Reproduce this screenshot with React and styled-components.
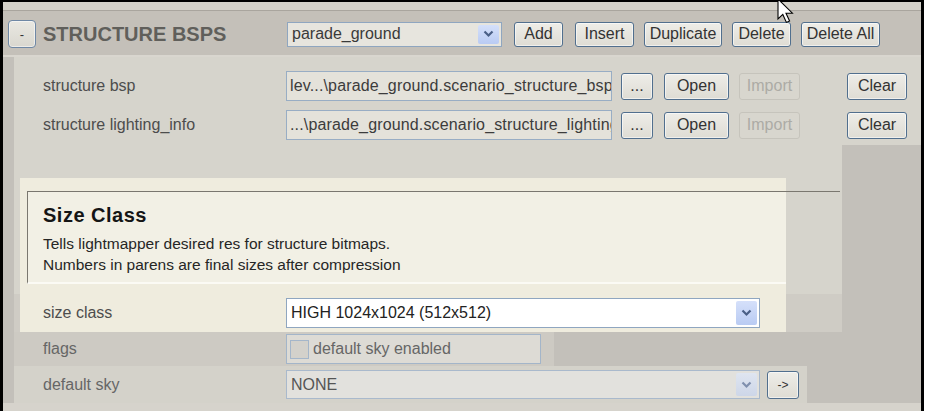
import styled, { createGlobalStyle } from "styled-components";

const GlobalStyle = createGlobalStyle`
  html, body {
    margin: 0;
    padding: 0;
    background: #fff;
  }
  body {
    font-family: "Liberation Sans", Arial, sans-serif;
  }
`;

const Chevron = ({ color = "#4a5f86" }) => (
  <svg width="11" height="8" viewBox="0 0 11 8">
    <path d="M1.5 1.5 L5.5 5.5 L9.5 1.5" fill="none" stroke={color} strokeWidth="2.2" />
  </svg>
);

const Cursor = () => (
  <CursorWrap>
    <svg width="20" height="28" viewBox="0 0 20 28">
      <path
        d="M1 1 L1 21 L5.8 16.4 L9.4 24.4 L12.6 23 L9 15.2 L15.4 15.2 Z"
        fill="#fff"
        stroke="#000"
        strokeWidth="1.1"
        strokeLinejoin="miter"
      />
    </svg>
  </CursorWrap>
);

const App = () => {
  return (
    <>
      <GlobalStyle />
      <Frame>
        <TopStrip />
        <Header>
          <CollapseButton>-</CollapseButton>
          <BlockTitle>STRUCTURE BSPS</BlockTitle>
          <Select $w={215} $h={25}>
            <SelectText>parade_ground</SelectText>
            <ArrowBox>
              <Chevron />
            </ArrowBox>
          </Select>
          <Btn $w={49} $ml={12}>Add</Btn>
          <Btn $w={59} $ml={12}>Insert</Btn>
          <Btn $w={78} $ml={10}>Duplicate</Btn>
          <Btn $w={59} $ml={10}>Delete</Btn>
          <Btn $w={79} $ml={10}>Delete All</Btn>
        </Header>

        <Body>
          <BspPanel>
            <Row>
              <Label>structure bsp</Label>
              <PathField>lev...\parade_ground.scenario_structure_bsp</PathField>
              <Btn $w={32} $h={27} $ml={9}>...</Btn>
              <Btn $w={65} $h={27} $ml={11}>Open</Btn>
              <Btn $w={61} $h={27} $ml={10} disabled>Import</Btn>
              <Btn $w={60} $h={27} $ml={47}>Clear</Btn>
            </Row>
            <Row>
              <Label>structure lighting_info</Label>
              <PathField>...\parade_ground.scenario_structure_lighting</PathField>
              <Btn $w={32} $h={27} $ml={9}>...</Btn>
              <Btn $w={65} $h={27} $ml={11}>Open</Btn>
              <Btn $w={61} $h={27} $ml={10} disabled>Import</Btn>
              <Btn $w={60} $h={27} $ml={47}>Clear</Btn>
            </Row>
          </BspPanel>

          <HelpArea>
            <HelpBlock>
              <HelpBox>
                <HelpTitle>Size Class</HelpTitle>
                <HelpText>
                  Tells lightmapper desired res for structure bitmaps.
                  <br />
                  Numbers in parens are final sizes after compression
                </HelpText>
              </HelpBox>
              <SizeRow>
                <Label>size class</Label>
                <Select $w={474} $h={30} $bg="#fff">
                  <SelectText $color="#222">HIGH 1024x1024 (512x512)</SelectText>
                  <ArrowBox>
                    <Chevron />
                  </ArrowBox>
                </Select>
              </SizeRow>
            </HelpBlock>
          </HelpArea>

          <FieldRow $w={540} $h={34} $bg="#cdcac3">
            <Label $muted>flags</Label>
            <CheckField>
              <CheckBox />
              <span>default sky enabled</span>
            </CheckField>
          </FieldRow>

          <FieldRow $w={793} $h={37} $bg="#d4d2ca">
            <Label $muted>default sky</Label>
            <Select $w={474} $h={29} $bg="#e2e1dd" $muted>
              <SelectText $color="#555">NONE</SelectText>
              <ArrowBox $muted>
                <Chevron color="#7f8fae" />
              </ArrowBox>
            </Select>
            <Btn $w={32} $h={28} $ml={7} $small>-&gt;</Btn>
          </FieldRow>
        </Body>

        <BottomStrip />
        <Cursor />
      </Frame>
    </>
  );
};

const Frame = styled.div`
  position: relative;
  width: 918px;
  height: 409px;
  border-top: 2px solid #000;
  border-left: 3px solid #000;
  border-right: 3px solid #000;
  background: #c3c0ba;
  display: flex;
  flex-direction: column;
`;

const TopStrip = styled.div`
  height: 8px;
  background: #d4d1c9;
  border-bottom: 1px solid #a9a59e;
`;

const Header = styled.div`
  height: 46px;
  box-sizing: border-box;
  display: flex;
  align-items: center;
  padding: 2px 0 0 5px;
  background: #c4c0b9;
  border-bottom: 2px solid #d9d6cf;
`;

const CollapseButton = styled.div`
  width: 28px;
  height: 28px;
  box-sizing: border-box;
  display: flex;
  align-items: center;
  justify-content: center;
  border: 1px solid #6f88a5;
  border-radius: 4px;
  background: linear-gradient(#e9e8e2, #d9d7cf);
  box-shadow: inset 0 0 0 1px rgba(255, 255, 255, 0.5);
  font-size: 13px;
  color: #333;
`;

const BlockTitle = styled.div`
  width: 237px;
  margin-left: 7px;
  font-size: 20px;
  font-weight: bold;
  color: #605f5b;
  white-space: nowrap;
`;

const Select = styled.div`
  width: ${({ $w }) => $w}px;
  height: ${({ $h }) => $h}px;
  margin-left: 7px;
  box-sizing: border-box;
  display: flex;
  align-items: center;
  border: 1px solid ${({ $muted }) => ($muted ? "#a9b9cc" : "#8fa6c0")};
  background: ${({ $bg }) => $bg || "#e7e5de"};
  padding: 2px;
`;

const SelectText = styled.span`
  flex: 1;
  padding-left: 2px;
  font-size: 16px;
  color: ${({ $color }) => $color || "#3a3a3a"};
  white-space: nowrap;
  overflow: hidden;
`;

const ArrowBox = styled.span`
  width: 21px;
  align-self: stretch;
  display: flex;
  align-items: center;
  justify-content: center;
  border-radius: 2px;
  background: ${({ $muted }) =>
    $muted ? "linear-gradient(#dfe5f0, #cdd6e8)" : "linear-gradient(#d5e0fa, #b9cbf3)"};
`;

const Btn = styled.button`
  width: ${({ $w }) => $w}px;
  height: ${({ $h }) => $h || 25}px;
  margin-left: ${({ $ml }) => $ml || 0}px;
  box-sizing: border-box;
  padding: 0;
  border: 1px solid ${({ disabled }) => (disabled ? "#c6c4bc" : "#516f8e")};
  border-radius: 3px;
  background: ${({ disabled }) =>
    disabled ? "#d8d6ce" : "linear-gradient(#eeede8, #dedcd4)"};
  box-shadow: ${({ disabled }) =>
    disabled ? "none" : "inset 0 0 0 1px rgba(255, 255, 255, 0.55)"};
  color: ${({ disabled }) => (disabled ? "#acaba5" : "#333")};
  font-family: "Liberation Sans", Arial, sans-serif;
  font-size: ${({ $small }) => ($small ? 12 : 16)}px;
  white-space: nowrap;
  flex-shrink: 0;
`;

const Body = styled.div`
  display: flex;
  flex-direction: column;
  padding-left: 11px;
`;

const BspPanel = styled.div`
  height: 88px;
  box-sizing: border-box;
  padding: 14px 0 0 29px;
  display: flex;
  flex-direction: column;
  gap: 9px;
  background: #d6d4cc;
`;

const Row = styled.div`
  height: 30px;
  display: flex;
  align-items: center;
`;

const Label = styled.div`
  width: 243px;
  flex-shrink: 0;
  font-size: 16px;
  color: ${({ $muted }) => ($muted ? "#666" : "#4d4d4d")};
  white-space: nowrap;
`;

const PathField = styled.div`
  width: 326px;
  height: 30px;
  box-sizing: border-box;
  padding: 0 3px;
  display: flex;
  align-items: center;
  border: 1px solid #98adc4;
  background: #e4e2da;
  font-size: 16px;
  letter-spacing: 0.15px;
  color: #3c3c3c;
  white-space: nowrap;
  overflow: hidden;
`;

const HelpArea = styled.div`
  width: 828px;
  height: 187px;
  box-sizing: border-box;
  padding: 33px 0 0 6px;
  background: linear-gradient(#d6d4cc 149px, #cfccc5 149px);
`;

const HelpBlock = styled.div`
  position: relative;
  width: 766px;
  height: 154px;
  box-sizing: border-box;
  padding-top: 13px;
  background: #efecde;

  /* divider runs on past the highlight */
  &::after {
    content: "";
    position: absolute;
    top: 13px;
    left: 100%;
    width: 54px;
    height: 1px;
    background: #7a776f;
  }
`;

const HelpBox = styled.div`
  height: 93px;
  box-sizing: border-box;
  margin-left: 7px;
  padding: 11px 0 0 15px;
  border-top: 1px solid #7a776f;
  border-left: 1px solid #7a776f;
  border-bottom: 2px solid #fbfaf4;
  background: #f2f0e5;
`;

const HelpTitle = styled.div`
  font-size: 20px;
  font-weight: bold;
  letter-spacing: 0.5px;
  line-height: 24px;
  color: #151515;
`;

const HelpText = styled.div`
  margin-top: 6px;
  font-size: 15.5px;
  line-height: 21px;
  color: #262626;
`;

const SizeRow = styled.div`
  height: 48px;
  box-sizing: border-box;
  display: flex;
  align-items: center;
  padding: 14px 0 4px 23px;

  & > ${Select} {
    margin-left: 0;
  }
`;

const FieldRow = styled.div`
  width: ${({ $w }) => $w}px;
  height: ${({ $h }) => $h}px;
  box-sizing: border-box;
  display: flex;
  align-items: center;
  padding-left: 29px;
  background: ${({ $bg }) => $bg};

  & > ${Select} {
    margin-left: 0;
  }
`;

const CheckField = styled.div`
  width: 255px;
  height: 30px;
  box-sizing: border-box;
  display: flex;
  align-items: center;
  gap: 4px;
  padding-left: 3px;
  border: 1px solid #a3b5c9;
  background: #dddbd5;
  font-size: 16px;
  color: #666;
`;

const CheckBox = styled.span`
  width: 19px;
  height: 19px;
  box-sizing: border-box;
  border: 1px solid #a4b6ca;
  background: #d3d1cb;
`;

const BottomStrip = styled.div`
  height: 8px;
  background: #d6d3cc;
`;

const CursorWrap = styled.div`
  position: absolute;
  top: -4px;
  left: 774px;
  line-height: 0;
`;

export default App;
